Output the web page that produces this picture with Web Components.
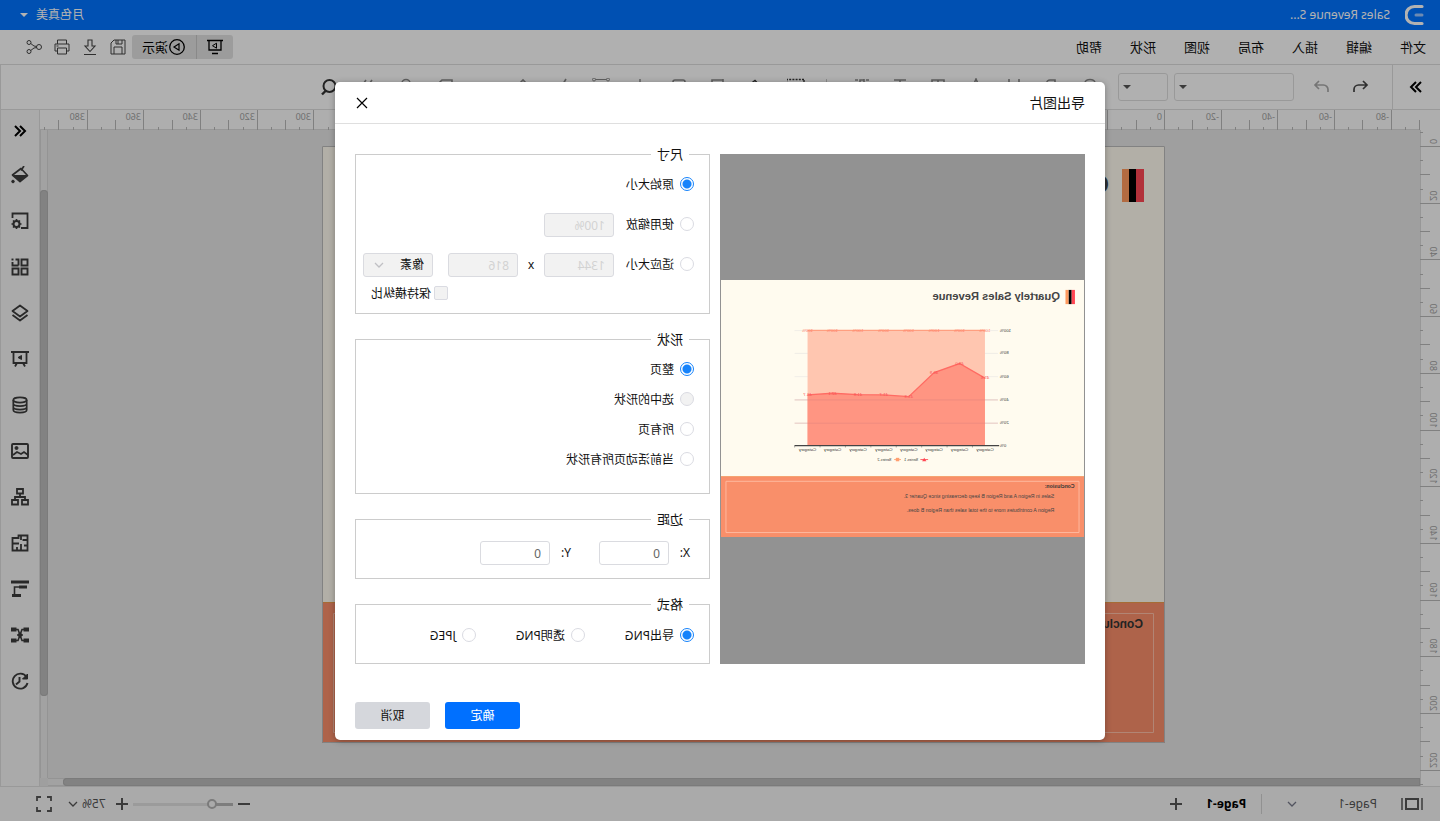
<!DOCTYPE html>
<html lang="zh-CN">
<head>
<meta charset="utf-8">
<title>Sales Revenue</title>
<style>
  html, body { margin: 0; height: 100%; overflow: hidden; }
  body { font: 12px/16px "Noto Sans", "Noto Sans CJK SC", sans-serif; color: #111; }
</style>
</head>
<body>
<draw-app></draw-app>

<template id="t-app">
  <style>
    :host { display: flex; flex-direction: column; position: relative; height: 100vh; background: #f4f4f4; transform: scaleX(-1); }
    main { flex: 1; min-height: 0; display: flex; }
    draw-stage { flex: 1; min-width: 0; }
    .mask { position: absolute; inset: 0; display: flex; justify-content: center; align-items: flex-start; padding-top: 82px; background: rgba(0,0,0,.3); }
  </style>
  <title-bar></title-bar>
  <menu-bar></menu-bar>
  <tool-bar></tool-bar>
  <main>
    <draw-stage></draw-stage>
    <side-panel></side-panel>
  </main>
  <status-bar></status-bar>
  <div class="mask"><export-dialog></export-dialog></div>
</template>

<template id="t-title">
  <style>
    :host { display: flex; align-items: center; height: 30px; padding: 0 20px 0 15px; background: #0073ff; color: #fff; }
    .name { margin-left: 15px; flex: 1; }
    .caret { margin-left: 8px; border: 4px solid transparent; border-top-color: #fff; border-bottom: 0; }
    ui-icon { width: 20px; height: 22px; }
  </style>
  <ui-icon name="logo" box="20 22"></ui-icon>
  <span class="name">Sales Revenue S...</span>
  <span>月色真美</span><i class="caret"></i>
</template>

<template id="t-menu">
  <style>
    :host { display: flex; align-items: center; height: 34px; padding: 0 26px 0 14px; background: #fdfdfd; border-bottom: 1px solid #dcdcdc; }
    nav { display: flex; gap: 28px; flex: 1; }
    a { color: #111; text-decoration: none; font-size: 13px; line-height: 20px; }
    button { display: flex; align-items: center; justify-content: center; border: 0; padding: 0; background: none; color: #444; font: 13px/20px "Noto Sans", "Noto Sans CJK SC", sans-serif; }
    .show { display: flex; height: 24px; border-radius: 3px; background: #e0e0e0; overflow: hidden; margin-right: 6px; }
    .show button { color: #000; width: 36px; }
    .show button + button { width: 65px; border-left: 1px solid #c4c4c4; }
    .act { width: 16px; margin-left: 12px; }
    .act:first-of-type { margin-left: 0; }
  </style>
  <nav><a href="#">文件</a><a href="#">编辑</a><a href="#">插入</a><a href="#">布局</a><a href="#">视图</a><a href="#">形状</a><a href="#">帮助</a></nav>
  <div class="show">
    <button aria-label="幻灯片"><ui-icon name="screen"></ui-icon></button>
    <button><ui-icon name="play"></ui-icon>演示</button>
  </div>
  <button class="act" aria-label="保存"><ui-icon name="save"></ui-icon></button>
  <button class="act" aria-label="下载"><ui-icon name="download"></ui-icon></button>
  <button class="act" aria-label="打印"><ui-icon name="print"></ui-icon></button>
  <button class="act" aria-label="分享"><ui-icon name="share"></ui-icon></button>
</template>

<template id="t-tools">
  <style>
    :host { display: flex; align-items: center; height: 44px; background: #fdfdfd; border-bottom: 1px solid #dcdcdc; border-right: 1px solid #dcdcdc; }
    button { border: 0; padding: 0; background: none; display: flex; justify-content: center; align-items: center; width: 38px; height: 32px; color: #444; }
    .expand { width: 48px; height: 44px; border-right: 1px solid #dcdcdc; color: #000; }
    .undo { margin-left: 13px; } .redo { color: #a8a8a8; }
    label { position: relative; margin-left: 9px; }
    label + label { margin-left: 6px; }
    select { display: block; appearance: none; box-sizing: border-box; width: 120px; height: 28px; border: 1px solid #dcdcdc; border-radius: 3px; background: #fdfdfd; }
    label + label select { width: 50px; }
    label::after { content: ""; position: absolute; right: 5px; top: 12px; border: 4px solid transparent; border-top-color: #555; border-bottom: 0; }
    .fmt { display: flex; margin-left: 9px; }
    .fmt button { color: #888; }
    .more button { width: 39px; }
    .sep { width: 1px; height: 16px; background: #c8c8c8; margin: 0 10px 0 16px; }
    .more { margin-left: 0; }
    .more .dark, .find { color: #333; }
  </style>
  <button class="expand" aria-label="展开"><ui-icon name="chev2r"></ui-icon></button>
  <button class="undo" aria-label="撤销"><ui-icon name="undo"></ui-icon></button>
  <button class="redo" aria-label="重做"><ui-icon name="redo"></ui-icon></button>
  <label><select aria-label="字体"><option></option></select></label>
  <label><select aria-label="字号"><option></option></select></label>
  <div class="fmt" id="a"></div>
  <span class="sep"></span>
  <div class="fmt more" id="b"></div>
</template>

<template id="t-stage">
  <style>
    :host { display: grid; grid-template: 20px minmax(0,1fr) 8px / 20px minmax(0,1fr) 8px; background: #e4e4e4; overflow: hidden; }
    .corner { background: #fafafa; }
    .top { grid-column: 2 / 4; }
    .left { grid-row: 2 / 4; }
    .canvas { position: relative; overflow: hidden; }
    report-page { position: absolute; left: 255px; top: 16px; width: 843px; height: 597px; }
    .v, .h { display: flex; background: #e8e8e8; }
    .v { flex-direction: column; padding: 60px 0 82px; box-shadow: inset 1px 0 #d4d4d4, inset -1px 0 #d4d4d4; }
    .h { padding-right: 15px; box-shadow: inset 0 1px #d4d4d4, inset 0 -1px #d4d4d4; }
    .v i, .h i { flex: 1; background: #bbb; border-radius: 4px; box-shadow: inset 0 0 0 1px #b0b0b0; }
    .h i { border-radius: 0 4px 4px 0; }
  </style>
  <div class="corner"></div>
  <page-ruler class="top" axis="x" start="255"></page-ruler>
  <page-ruler class="left" axis="y" start="16"></page-ruler>
  <div class="canvas"><report-page></report-page></div>
  <div class="v"><i></i></div>
  <div class="h"><i></i></div>
  <div></div>
</template>

<template id="t-side">
  <style>
    :host { display: flex; flex-direction: column; box-sizing: border-box; width: 40px; border: 1px solid #dcdcdc; border-width: 0 1px; background: #f4f4f4; }
    button { display: flex; align-items: center; justify-content: center; width: 38px; height: 46px; padding: 0; border: 0; background: none; color: #3c3c3c; }
    button:first-of-type { height: 42px; color: #000; }
  </style>
</template>

<template id="t-status">
  <style>
    :host { display: flex; align-items: center; height: 34px; padding: 0 35px 0 17px; border-top: 1px solid #dcdcdc; background: #f4f4f4; color: #555; }
    button { display: flex; padding: 0; border: 0; background: none; color: #555; font: inherit; }
    .pages { margin-left: 24px; }
    .list { margin-left: 41px; color: #76798a; }
    .rule { width: 1px; height: 20px; margin: 0 15px 0 25px; background: #d0d0d0; }
    .tab { color: #000; font-weight: 700; }
    .add { margin-left: 24px; }
    .space { flex: 1; }
    input { appearance: none; width: 100px; height: 12px; margin: 0 5px; background: linear-gradient(90deg, #b4b4b4 20px, #dedede 20px) center / 100% 3px no-repeat; }
    input::-webkit-slider-thumb { appearance: none; box-sizing: border-box; width: 10px; height: 10px; border: 2px solid #b0b0b0; border-radius: 50%; background: #f4f4f4; }
    .pct { margin: 0 4px 0 10px; }
    .full { margin-left: 15px; }
    ui-icon.s { width: 12px; height: 12px; }
    ui-icon.c { width: 10px; height: 10px; }
  </style>
  <button aria-label="页面视图"><ui-icon name="pages" style="width:22px;height:14px" box="22 14"></ui-icon></button>
  <span class="pages">Page-1</span>
  <button class="list" aria-label="页面列表"><ui-icon class="c" name="down" box="10 10"></ui-icon></button>
  <span class="rule"></span>
  <button class="tab">Page-1</button>
  <button class="add" aria-label="新建页面"><ui-icon class="s" name="plus" box="12 12"></ui-icon></button>
  <span class="space"></span>
  <button aria-label="缩小"><ui-icon class="s" name="minus" box="12 12"></ui-icon></button>
  <input type="range" value="17" aria-label="缩放">
  <button aria-label="放大"><ui-icon class="s" name="plus" box="12 12"></ui-icon></button>
  <span class="pct">75%</span>
  <button aria-label="缩放比例"><ui-icon class="c" name="down" box="10 10"></ui-icon></button>
  <button class="full" aria-label="全屏"><ui-icon name="full"></ui-icon></button>
</template>

<template id="t-group">
  <style>
    :host { display: block; }
    fieldset { box-sizing: border-box; min-width: 0; height: 100%; margin: 0; padding: 0 0 0 15px; border: 1px solid #ccc; }
    legend { margin-left: 5px; padding: 0 6px; font-size: 13px; line-height: 21px; }
  </style>
  <fieldset><legend></legend><slot></slot></fieldset>
</template>

<template id="t-dialog">
  <style>
    :host { display: block; width: 770px; border-radius: 5px; background: #fff; box-shadow: 0 1px 6px rgba(0,0,0,.3); color: #111; }
    header { display: flex; align-items: center; justify-content: space-between; height: 41px; padding: 0 20px; border-bottom: 1px solid #dfdfdf; }
    h2 { margin: 0; font: 14px/20px "Noto Sans", "Noto Sans CJK SC", sans-serif; }
    header button { display: flex; padding: 0; border: 0; background: none; color: #000; }
    .body { display: flex; gap: 10px; padding: 20px 20px 0; }
    .preview { box-sizing: border-box; flex: 1; display: flex; align-items: center; margin-top: 10px; padding: 0 1px; background: #929292; }
    report-page { width: 100%; aspect-ratio: 843 / 597; }
    .forms { flex: none; width: 355px; display: flex; flex-direction: column; gap: 15px; }
    .size { height: 170px; } .shape { height: 165px; } .margin, .format { height: 70px; }
    .row { display: flex; align-items: center; height: 40px; }
    .keep { display: flex; align-items: center; gap: 3px; margin-left: 246px; height: 18px; }
    .shape .row { height: 30px; }
    .shape .row:first-child { margin-top: 5px; }
    .margin .row { height: 44px; }
    .format .row { gap: 40px; height: 42px; }
    .pick { display: flex; align-items: center; gap: 6px; }
    input[type=radio], input[type=checkbox] { appearance: none; box-sizing: border-box; width: 14px; height: 14px; margin: 0 0 2px; border: 1px solid #dadbe2; border-radius: 50%; background: #fff; }
    input[type=radio]:checked { border-color: #1683fb; background: radial-gradient(circle, #1683fb 4px, #fff 5px); }
    input[type=checkbox] { border-radius: 2px; }
    input[type=text], select { appearance: none; box-sizing: border-box; width: 70px; height: 24px; margin: 0; padding: 0 8px; border: 1px solid #dadbe0; border-radius: 3px; background: #fff; color: #666; font: inherit; }
    input:disabled { background: #f2f2f2 !important; color: #d2d2d2 !important; }
    select:disabled { background: #f2f2f2; color: #111; opacity: 1; }
    .pick + input[type=text] { margin-left: 12px; }
    .x { width: 26px; text-align: center; }
    .unit { display: flex; position: relative; margin-left: 15px; }
    .unit ui-icon { position: absolute; right: 11px; top: 7px; width: 10px; height: 10px; color: #c0c0c4; }
    .ml { width: 21px; margin-left: 4px; }
    .ml + input + .ml { margin-left: 28px; }
    .margin .row { height: 46px; }
    footer { display: flex; justify-content: flex-end; gap: 15px; padding: 38px 20px 11px; }
    footer button { width: 75px; height: 27px; padding: 0; border: 0; border-radius: 3px; background: #d5d7dc; color: #111; font: inherit; }
    footer .ok { background: #0070ff; color: #fff; }
  </style>
  <header><h2>导出图片</h2><button aria-label="关闭"><ui-icon name="close" style="width:14px;height:14px" box="14 14"></ui-icon></button></header>
  <div class="body">
    <div class="preview"><report-page full></report-page></div>
    <div class="forms">
      <option-group class="size" label="尺寸">
        <div class="row"><label class="pick"><input type="radio" name="size" checked>原始大小</label></div>
        <div class="row"><label class="pick"><input type="radio" name="size">使用缩放</label><input type="text" value="100%" disabled aria-label="缩放"></div>
        <div class="row"><label class="pick"><input type="radio" name="size">适应大小</label><input type="text" value="1344" disabled aria-label="宽"><span class="x">x</span><input type="text" value="816" disabled aria-label="高"><span class="unit"><select disabled aria-label="单位"><option>像素</option></select><ui-icon name="down" box="10 10"></ui-icon></span></div>
        <label class="keep"><input type="checkbox" disabled>保持横纵比</label>
      </option-group>
      <option-group class="shape" label="形状">
        <div class="row"><label class="pick"><input type="radio" name="shape" checked>整页</label></div>
        <div class="row"><label class="pick"><input type="radio" name="shape" disabled>选中的形状</label></div>
        <div class="row"><label class="pick"><input type="radio" name="shape">所有页</label></div>
        <div class="row"><label class="pick"><input type="radio" name="shape">当前活动页所有形状</label></div>
      </option-group>
      <option-group class="margin" label="边距">
        <div class="row"><label class="ml" for="mx">X:</label><input id="mx" type="text" value="0"><label class="ml" for="my">Y:</label><input id="my" type="text" value="0"></div>
      </option-group>
      <option-group class="format" label="格式">
        <div class="row"><label class="pick"><input type="radio" name="fmt" checked>导出PNG</label><label class="pick"><input type="radio" name="fmt">透明PNG</label><label class="pick"><input type="radio" name="fmt">JPEG</label></div>
      </option-group>
    </div>
  </div>
  <footer><button class="ok">确定</button><button>取消</button></footer>
</template>

<script>
const ICONS = {
  logo: '<path d="M3 2.500h7.500a8.500 8.500 0 0 1 0 17H3" stroke-width="3.200" stroke-linecap="round"/><path d="M3 11h6" stroke="#9cc6ff" stroke-width="3" stroke-linecap="round"/>',
  screen: '<path d="M1 2.500h16M3 3v9h12V3M6 15.500h6" stroke-width="1.300"/><path d="M7.500 5.200v5l4-2.500z"/>',
  play: '<circle cx="9" cy="9" r="7.300" stroke-width="1.300"/><path d="M7 5.800v6.400l5-3.200z" stroke-width="1.200"/>',
  save: '<path d="M2 2h11l3 3v11H2zM5 2v4h6V2M9 2v4M5 16V9h8v7"/>',
  download: '<path d="M7 2h4v6h3l-5 5.500L4 8h3zM3 16.500h12" stroke-width="1.100"/>',
  print: '<path d="M4.500 6V2h9v4M4.500 13H2V6h14v7h-2.500M4.500 10h9v6h-9zM12.500 8h2"/>',
  share: '<circle cx="4" cy="9" r="2.500"/><circle cx="14" cy="4.500" r="2"/><circle cx="14" cy="13.500" r="2"/><path d="M6.300 8.500 9 8l3.300-2.500M6.300 9.500 9 10l3.300 2.500"/>',
  chev2r: '<path d="m4 4 5 5-5 5M9 4l5 5-5 5" stroke-width="2"/>',
  chev2l: '<path d="m9 4-5 5 5 5M14 4 9 9l5 5" stroke-width="2"/>',
  undo: '<path d="m6 3-4 4 4 4M2.500 7h8a4.500 4.500 0 0 1 4.500 4.500V14" stroke-width="1.700"/>',
  redo: '<path d="m12 3 4 4-4 4M15.500 7h-8A4.500 4.500 0 0 0 3 11.500V14" stroke-width="1.700"/>',
  find: '<circle cx="7.500" cy="8" r="6" stroke-width="2"/><path d="m11 12.500 4 4" stroke-width="2.400"/>',
  round: '<path d="M4 16V5a5 3.500 0 0 1 10 0v11z" stroke-width="1.600"/>',
  bold: '<path d="M6 2h5a3.500 3.500 0 0 1 0 7H6zM6 9h6a3.500 3.500 0 0 1 0 7H6z" stroke-width="1.600"/>',
  under: '<path d="M4 1v8a5 5 0 0 0 10 0V1" stroke-width="1.600"/>',
  font: '<path d="M3 15 9 1l6 14M5.500 10h7" stroke-width="1.600"/>',
  table: '<path d="M3 2h12v14H3zM3 8h12M9 2v14" stroke-width="1.600"/>',
  line: '<path d="M3 2h12M9 2v13M4 8h10" stroke-width="1.600"/>',
  text: '<path d="M2 2h3M7 2h4v14M13 2h3M7 1v8" stroke-width="1.600"/>',
  dash: '<path d="M1 1.500h17v13H1z" stroke-width="1.400" stroke-dasharray="2 1.200"/>',
  pen: '<path d="m10 3.500 1-1L13 4l-7 11H3v-3z" stroke-width="1.400"/>',
  crop: '<path d="M4 1v14h12M4 2h11v9" stroke-width="1.600"/>',
  card: '<rect x="3" y="2" width="12" height="14" rx="2" stroke-width="1.600"/>',
  cross: '<path d="M9 1v16M3 9h12" stroke-width="1.400"/>',
  nodes: '<circle cx="2" cy="1.500" r="1.500"/><circle cx="16" cy="1.500" r="1.500"/><path d="M3.500 1.500h11M5 4.500h8v11"/>',
  slash: '<path d="m5 1 9 15" stroke-width="1.600"/>',
  peak: '<path d="m5 6 4-4 4 4v9" stroke-width="1.600"/>',
  blank: '',
  flag: '<path d="M2 2h10l4 4-5 5H2z" stroke-width="1.600"/>',
  lock: '<path d="M5 8V5a4 3.500 0 0 1 8 0v3M3 8h12v8H3z" stroke-width="1.600"/>',
  fwd: '<path d="m4 2 5 7-5 7M10 2l5 7-5 7" stroke-width="1.600"/>',
  fill: '<path d="M8 2.500 16.500 9 9 15.500 1.500 9.500z" stroke-width="1.700" stroke-linejoin="round"/><path d="M2.500 9.500H15l-6 5.500z" fill="currentColor"/><circle cx="16" cy="15.500" r="1.300" fill="currentColor"/><path d="M5 0l3 4.500" stroke-width="1.700"/>',
  pageset: '<path d="M8 16H1.500V1.500h15V6" stroke-width="1.800"/><circle cx="12.500" cy="12" r="3" stroke-width="2"/><path d="M12.500 7v2M12.500 15v2M7.500 12h2M15.500 12h2M9 8.500l1.500 1.500M16 8.500 14.500 10M9 15.500l1.500-1.500M16 15.500 14.500 14" stroke-width="1.600"/>',
  grid: '<path d="M1.500 1.500h6v6h-6zM1.500 10.500h6v6h-6zM10.500 10.500h6v6h-6zM10.500 7.500v-6h3M16.500 4v3.500h-6" stroke-width="1.900"/><path d="M15.500 1.500h2" stroke-width="1.900"/>',
  layers: '<path d="m9 1.500 7.500 5.500L9 12.500 1.500 7zM1.500 11 9 16.500l7.500-5.500" stroke-width="1.800" stroke-linejoin="round"/>',
  present: '<path d="M0 2h18M2.500 2v11h13V2M6 13l-2 3.500M12 13l2 3.500" stroke-width="1.800"/><path d="M7.500 5.500v4l3.500-2z" fill="currentColor"/>',
  data: '<ellipse cx="9" cy="4" rx="6.700" ry="2.600" stroke-width="1.700"/><path d="M2.300 4v10c0 3.400 13.400 3.400 13.400 0V4M2.300 7.500c0 3.400 13.400 3.400 13.400 0M2.300 11c0 3.400 13.400 3.400 13.400 0" stroke-width="1.700"/>',
  image: '<rect x="1" y="2" width="16" height="14" rx="1" stroke-width="1.900"/><circle cx="12.500" cy="6" r="1.500" fill="currentColor"/><path d="m1 13 4-3 3 2 4-2 4 3" stroke-width="1.700"/>',
  org: '<path d="M6 1h6v4.500H6zM1 12h6v4.500H1zM11 12h6v4.500h-6zM9 5.500V9M4 12V9h10v3" stroke-width="1.800"/>',
  plan: '<path d="M1.500 1.500h9v2.500h6v12.500h-15zM1.500 6h5M1.500 11.500H5M8 1.500V6M8 10v6.500M10 9.500h6.500M12 13v3.500" stroke-width="1.800"/>',
  gantt: '<path d="M4 7h10.500v7" stroke-width="1.600"/><path d="M0 .5h18v3H0zM2 5.500h8v3H2zM8 14h9v3H8z" fill="currentColor" stroke="none"/>',
  mind: '<path d="M5 3.500h2l4 11h2.500M13 3.500h-2l-4 11H5M6 9h6" stroke-width="1.600"/><path d="M0 1.500h5.500v4H0zM12.500 1.500H18v4h-5.500zM0 12.500h5.500v4H0zM12.500 12.500H18v4h-5.500zM7 7.500h4v3H7z" fill="currentColor" stroke="none"/>',
  history: '<path d="M2.500 5A7.500 7.500 0 1 1 1.500 11" stroke-width="1.900"/><path d="M1.500 2v5h5z" fill="currentColor"/><path d="M9.500 5v4.500l3.500 3" stroke-width="1.900"/>',
  pages: '<path d="M1 1v12M21 1v12" stroke-width="1.500"/><path d="M5 2h12v10H5z" stroke-width="2"/>',
  down: '<path d="m1 3 4 4 4-4" stroke-width="1.300"/>',
  plus: '<path d="M6 0v12M0 6h12" stroke-width="2"/>',
  minus: '<path d="M0 6h12" stroke-width="2"/>',
  full: '<path d="M2 6V2h4M12 2h4v4M16 12v4h-4M6 16H2v-4" stroke-width="1.800"/>',
  close: '<path d="m2 2 10 10M12 2 2 12" stroke-width="1.200"/>'
};

/* Base class: clones the given template into an open shadow root. */
class Base extends HTMLElement {
  connectedCallback() {
    if (this.shadowRoot) return;
    const root = this.attachShadow({ mode: 'open' });
    if (this.constructor.tpl) root.append(document.getElementById(this.constructor.tpl).content.cloneNode(true));
    this.ready(root);
  }
  ready() {}
}
const iconButton = n => `<button aria-label="${n}"><ui-icon name="${n}"></ui-icon></button>`;

customElements.define('ui-icon', class extends Base {
  ready(root) {
    root.innerHTML = `<style>:host{display:block;flex:none;width:18px;height:18px}svg{display:block;width:100%;height:100%;fill:none;stroke:currentColor}</style>
      <svg viewBox="0 0 ${this.getAttribute('box') || '18 18'}" aria-hidden="true">${ICONS[this.getAttribute('name')]}</svg>`;
  }
});
customElements.define('title-bar', class extends Base { static tpl = 't-title'; });
customElements.define('menu-bar', class extends Base { static tpl = 't-menu'; });
customElements.define('tool-bar', class extends Base {
  static tpl = 't-tools';
  ready(root) {
    root.getElementById('a').innerHTML = ['round', 'bold', 'under', 'font', 'table', 'line', 'text'].map(iconButton).join('');
    const b = root.getElementById('b');
    b.innerHTML = ['dash', 'pen', 'crop', 'card', 'cross', 'nodes', 'slash', 'peak', 'blank', 'flag', 'lock', 'fwd', 'find'].map(iconButton).join('');
    [0, 1, 12].forEach(i => b.children[i].classList.add('dark'));
  }
});
customElements.define('side-panel', class extends Base {
  static tpl = 't-side';
  ready(root) {
    root.append(document.createRange().createContextualFragment(
      ['chev2l', 'fill', 'pageset', 'grid', 'layers', 'present', 'data', 'image', 'org', 'plan', 'gantt', 'mind', 'history'].map(iconButton).join('')));
  }
});
customElements.define('status-bar', class extends Base { static tpl = 't-status'; });
customElements.define('draw-stage', class extends Base { static tpl = 't-stage'; });

/* Millimetre ruler: long tick and number every 20, middle tick every 10, short tick every 5. */
customElements.define('page-ruler', class extends Base {
  ready(root) {
    const horizontal = this.getAttribute('axis') === 'x', start = +this.getAttribute('start');
    const length = horizontal ? 1380 : 656;
    let ticks = '', labels = '';
    for (let v = -90; v <= 480; v += 5) {
      const p = Math.round(start + v * 2.835);
      if (p < 0 || p >= length) continue;
      const from = v % 20 === 0 ? 0 : v % 10 === 0 ? 10 : 17;
      ticks += horizontal ? `M${p}.5 ${from}V20` : `M${from} ${p}.5H20`;
      if (v % 20 === 0) labels += horizontal
        ? `<text x="${p + 3}" y="10">${v}</text>`
        : `<text transform="translate(10 ${p - 2}) rotate(-90)">${v}</text>`;
    }
    root.innerHTML = `<style>:host{display:block;overflow:hidden;background:#fafafa;box-shadow:inset ${horizontal ? '0 -1px' : '-1px 0'} #d8d8d8}
      svg{display:block;width:100%;height:100%;overflow:visible}path{stroke:#b8b8b8}text{font:9px "Noto Sans",sans-serif;fill:#a0a0a0}</style>
      <svg><path d="${ticks}"/>${labels}</svg>`;
  }
});

/* The slide: heading, stacked area chart and conclusion. The chart is drawn when "full" is set. */
customElements.define('report-page', class extends Base {
  ready(root) {
    const xs = [230, 289, 348, 407, 465, 525, 584, 642], ys = [228, 194, 215, 271, 267, 266, 263, 267];
    const pts = xs.map((x, i) => `${x},${ys[i]}`).join(' ');
    const full = this.hasAttribute('full');
    const chart = !full ? '' : `
      <g stroke="#ddd">${[117, 170, 224, 278, 332].map(y => `<path d="M200 ${y}.5H672"/>`).join('')}</g>
      <path d="M230 117H642V384H230z" fill="#ffc6b0"/>
      <polygon points="230,384 ${pts} 642,384" fill="#ff9582"/>
      <path d="M200 278.5H672M200 332.500H672" stroke="#c77" stroke-opacity=".4" stroke-width="2"/>
      <path d="M230 117H642" stroke="#ff9f80" stroke-width="3"/>
      <polyline points="${pts}" fill="none" stroke="#ff6b63" stroke-width="3"/>
      <path d="M197 384.500H672" stroke="#444" stroke-width="3"/>
      <path d="${[259, 318, 377, 436, 495, 554, 613, 672].map(x => `M${x} 384v5`).join('')}" stroke="#444"/>
      <g font-size="10" fill="#333" text-anchor="middle">
        ${[100, 80, 60, 40, 20, 0].map((v, i) => `<text x="195" y="${[120, 173, 227, 281, 335, 387][i]}" text-anchor="end">${v}%</text>`).join('')}
        ${xs.map(x => `<text x="${x}" y="398">Category</text>`).join('')}
        <g fill="#ff7d66">${xs.map(x => `<text x="${x}" y="120">100%</text>`).join('')}</g>
        <g fill="#fa4f52">${xs.map((x, i) => `<text x="${x}" y="${ys[i] + 3}">${(38.4 - ys[i] / 10 + 30).toFixed(1)}</text>`).join('')}</g>
      </g>
      <path d="M362 417h18" stroke="#ff4753" stroke-width="2"/><path d="m366 421 5-8 5 8z" fill="#ff4753"/>
      <path d="M425 417h16" stroke="#ff9f70" stroke-width="2"/><path d="M429 413h8v8h-8z" fill="#ff9f70"/>
      <g font-size="9" fill="#333"><text x="385" y="420">Series 1</text><text x="447" y="420">Series 2</text></g>`;
    root.innerHTML = `<style>:host{display:block}svg{display:block;width:100%;height:100%;font-family:"Liberation Sans",sans-serif}</style>
      <svg viewBox="0 0 843 597">
        <path d="M0 0h843v597H0z" fill="#fffbef"/>
        <path d="M21 23h8v33h-8z" fill="#ff4753"/><path d="M29 23h7v33h-7z" fill="#000"/><path d="M36 23h7v33h-7z" fill="#ff9a5e"/>
        <text x="56" y="47" font-size="26" font-weight="700" fill="#444">Quartely Sales Revenue</text>
        ${chart}
        <path d="M0 456h843v141H0z" fill="#f98f6a"/>
        <path d="M0 456.500h843" stroke="#ee9b4c"/>
        <path d="M11.500 467.500h820v119h-820z" fill="none" stroke="#ffbfa6" stroke-width="${full ? 2 : 1}"/>
        <text x="22" y="482" font-size="12" font-weight="700" fill="#333">Conclusion:</text>
        ${full ? `<g font-size="12" fill="#444"><text x="69" y="507">Sales in Region A and Region B keep decreasing since Quarter 3.</text>
        <text x="69" y="539">Region A contributes more to the total sales than Region B does.</text></g>` : '<path d="M.5.5h842v596H.5z" fill="none" stroke="#bbb"/>'}
      </svg>`;
  }
});
customElements.define('option-group', class extends Base {
  static tpl = 't-group';
  ready(root) { root.querySelector('legend').textContent = this.getAttribute('label'); }
});
customElements.define('export-dialog', class extends Base { static tpl = 't-dialog'; });
customElements.define('draw-app', class extends Base { static tpl = 't-app'; });
</script>
</body>
</html>
